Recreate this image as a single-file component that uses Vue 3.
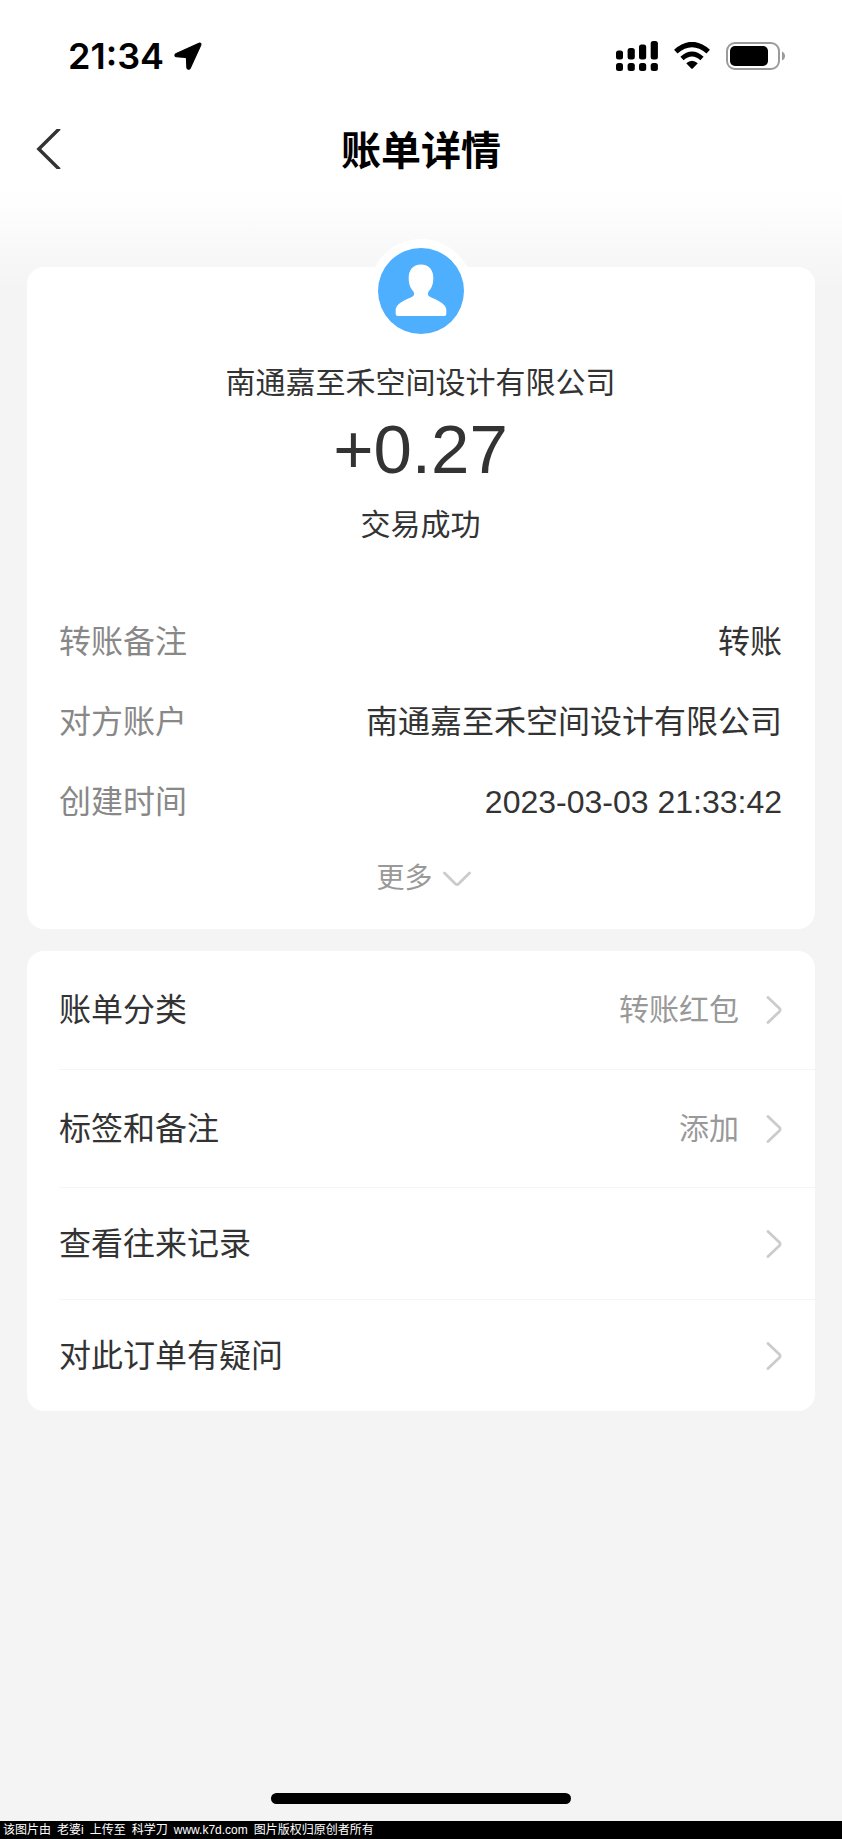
<script setup>
const details = [
  { label: '转账备注', value: '转账' },
  { label: '对方账户', value: '南通嘉至禾空间设计有限公司' },
  { label: '创建时间', value: '2023-03-03 21:33:42' },
]

const actions = [
  { label: '账单分类', value: '转账红包', tall: true },
  { label: '标签和备注', value: '添加', tall: true },
  { label: '查看往来记录', value: '', tall: false },
  { label: '对此订单有疑问', value: '', tall: false },
]

const credits = ['该图片由', '老婆i', '上传至', '科学刀', 'www.k7d.com', '图片版权归原创者所有']
</script>

<template>
  <div class="page">
    <div class="status-bar">
      <div class="clock">
        <span>21:34</span>
        <svg width="28" height="28" viewBox="0 0 28 28" aria-hidden="true">
          <path d="M25 1.200 1.800 11.700C.4 12.400.8 14.500 2.200 14.700L11.600 15.400Q12.500 15.500 12.500 16.400L12.900 25.600C13.100 27.500 15.500 27.800 16.300 26L26.700 3.200C27.300 1.700 26.400.6 25 1.200Z" stroke="#000" stroke-width="1.200" stroke-linejoin="round" />
        </svg>
      </div>
      <div class="indicators">
        <svg width="42" height="30" viewBox="0 0 42 30" aria-hidden="true">
          <rect x="0" y="9.500" width="7" height="9" rx="2.500" />
          <rect x="11.600" y="7" width="7.200" height="11.500" rx="2.500" />
          <rect x="23" y="3.500" width="7.200" height="15" rx="2.500" />
          <rect x="34.700" y="0" width="7.200" height="18.500" rx="2.500" />
          <rect x="0" y="22" width="7" height="8" rx="2.500" />
          <rect x="11.600" y="22" width="7.200" height="8" rx="2.500" />
          <rect x="23" y="22" width="7.200" height="8" rx="2.500" />
          <rect x="34.700" y="22" width="7.200" height="8" rx="2.500" />
        </svg>
        <svg width="36" height="28" viewBox="0 0 36 28" aria-hidden="true">
          <path d="M1.800 9.600Q18-4.600 34.200 9.600" fill="none" stroke="#000" stroke-width="5.200" />
          <path d="M8 16.500Q18 7.500 28 16.500" fill="none" stroke="#000" stroke-width="4.800" />
          <path d="M12.200 21.200Q18 16.200 23.800 21.200L19 26.300Q18 27.300 17 26.300Z" />
        </svg>
        <svg width="60" height="28" viewBox="0 0 60 28" aria-hidden="true">
          <rect x="1" y="1" width="52" height="26" rx="8" fill="none" stroke="#9b9b9b" stroke-width="2" />
          <rect x="4" y="4" width="38" height="20" rx="5" />
          <path d="M56 9.500Q59 11 59 14T56 18.500Z" fill="#9b9b9b" />
        </svg>
      </div>
    </div>

    <header class="nav">
      <button class="back" type="button" aria-label="返回">
        <svg width="25" height="40" viewBox="0 0 25 40" aria-hidden="true">
          <path d="M23.500 -0.500 2.800 20 23.500 40.500" fill="none" stroke="#333" stroke-width="3.400" />
        </svg>
      </button>
      <h1>账单详情</h1>
    </header>

    <main>
      <section class="card summary">
        <div class="avatar">
          <svg width="86" height="86" viewBox="0 0 86 86" aria-hidden="true">
            <circle cx="43" cy="43" r="43" fill="#4fafff" />
            <path d="M43 16.500C51 16.500 55.300 22 55.300 30C55.300 37 53 41 50.500 43.500C49.500 46 49.800 47.500 51.500 48.500C57 51.500 67 54.500 68.300 61V66Q68.300 68 66.300 68H19.700Q17.700 68 17.700 66V61C19 54.500 29 51.500 34.500 48.500C36.200 47.500 36.500 46 35.500 43.500C33 41 30.700 37 30.700 30C30.700 22 35 16.500 43 16.500Z" fill="#fff" />
          </svg>
        </div>
        <p class="party">南通嘉至禾空间设计有限公司</p>
        <p class="amount">+0.27</p>
        <p class="party state">交易成功</p>
        <dl>
          <div v-for="item in details" :key="item.label" class="detail">
            <dt>{{ item.label }}</dt>
            <dd>{{ item.value }}</dd>
          </div>
        </dl>
        <button class="more" type="button">
          <span>更多</span>
          <svg width="28" height="16" viewBox="0 0 28 16" aria-hidden="true">
            <path d="M1.500 2 12.300 12.800Q14 14.500 15.700 12.800L26.500 2" fill="none" stroke="#ccc" stroke-width="2.800" stroke-linecap="round" />
          </svg>
        </button>
      </section>

      <nav class="card actions">
        <a v-for="item in actions" :key="item.label" href="#" class="action" :class="{ tall: item.tall }">
          <span class="action-label">{{ item.label }}</span>
          <span class="action-value">{{ item.value }}</span>
          <svg width="16" height="28" viewBox="0 0 16 28" aria-hidden="true">
            <path d="M2 1.500 13.300 12.300Q15 14 13.300 15.700L2 26.500" fill="none" stroke="#ccc" stroke-width="2.800" stroke-linecap="round" />
          </svg>
        </a>
      </nav>
    </main>

    <div class="home-indicator"></div>
    <footer>
      <span v-for="part in credits" :key="part">{{ part }}</span>
    </footer>
  </div>
</template>

<style>
body {
  margin: 0;
  background: #f4f4f4;
}
</style>

<style scoped>
.page {
  display: flex;
  flex-direction: column;
  min-height: 100vh;
  background: linear-gradient(#fff 190px, #f4f4f4 290px);
  color: #333;
  font-family: "Liberation Sans", "Noto Sans CJK SC", sans-serif;
}

svg {
  display: block;
  flex: none;
}

button {
  border: 0;
  padding: 0;
  background: none;
  font: inherit;
  cursor: pointer;
}

p,
h1,
dl,
dd {
  margin: 0;
}

.status-bar {
  display: flex;
  align-items: center;
  justify-content: space-between;
  height: 112px;
  padding: 0 56px 0 68px;
}

.clock {
  display: flex;
  align-items: center;
  gap: 10px;
  color: #000;
  font: 600 36px/40px Inter, sans-serif;
}

.indicators {
  display: flex;
  align-items: center;
  gap: 16px;
}

.nav {
  display: grid;
  grid-template-columns: 1fr auto 1fr;
  align-items: center;
  height: 74px;
  padding: 0 36px;
}

.back {
  justify-self: start;
}

h1 {
  padding-top: 4px;
  color: #000;
  font-size: 40px;
  font-weight: 700;
  line-height: 48px;
}

main {
  display: flex;
  flex-direction: column;
  gap: 22px;
  padding: 81px 27px 0;
}

.card {
  border-radius: 17px;
  background: #fff;
}

.summary {
  display: flex;
  flex-direction: column;
  padding: 0 33px 14px 32px;
}

.avatar {
  align-self: center;
  margin-top: -28px;
  padding: 9px;
  border-radius: 50%;
  background: #fff;
}

.party {
  margin-top: 20px;
  font-size: 30px;
  line-height: 40px;
  text-align: center;
}

.amount {
  margin-top: 7px;
  font-size: 69px;
  line-height: 80px;
  text-align: center;
}

.state {
  margin-top: 15px;
}

dl {
  margin-top: 57px;
}

.detail {
  display: flex;
  justify-content: space-between;
  gap: 24px;
  font-size: 32px;
  line-height: 80px;
}

dt {
  color: #888;
}

.more {
  display: flex;
  align-items: center;
  align-self: center;
  gap: 10px;
  height: 73px;
  padding-left: 6px;
  color: #999;
  font-size: 28px;
  line-height: 40px;
}

.actions {
  padding-left: 32px;
}

.action {
  display: flex;
  align-items: center;
  box-sizing: border-box;
  height: 112px;
  padding-right: 33px;
  color: #333;
  font-size: 32px;
  line-height: 40px;
  text-decoration: none;
}

.action.tall {
  height: 118px;
}

.action + .action {
  border-top: 1px solid #f5f5f5;
}

.action-value {
  margin-left: auto;
  margin-right: 27px;
  color: #999;
  font-size: 30px;
}

.home-indicator {
  width: 300px;
  height: 11px;
  margin: auto auto 17px;
  border-radius: 6px;
  background: #000;
}

footer {
  display: flex;
  flex-wrap: wrap;
  gap: 0 6px;
  padding: 0 3px;
  background: #000;
  color: #fff;
  font-size: 12px;
  line-height: 18px;
}
</style>
